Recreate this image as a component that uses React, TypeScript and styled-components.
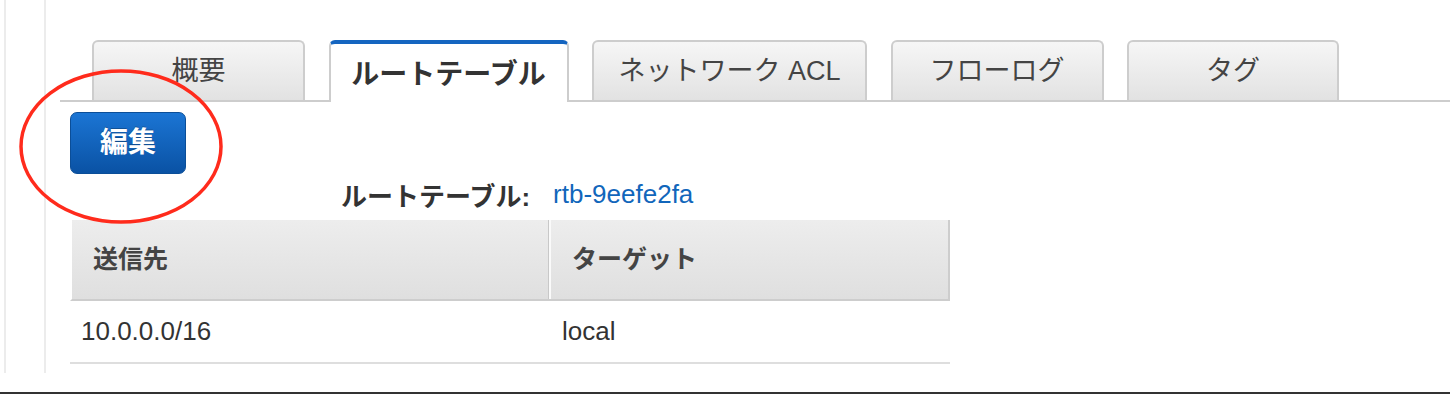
import styled, { createGlobalStyle } from 'styled-components';

const GlobalStyle = createGlobalStyle`
  html, body {
    margin: 0;
    padding: 0;
    background: #fff;
  }
  body {
    font-family: 'Liberation Sans', 'Noto Sans CJK JP', sans-serif;
    color: #333;
  }
  * {
    box-sizing: border-box;
  }
`;

const tabs = [
  { label: '概要', width: 213 },
  { label: 'ルートテーブル', width: 240, active: true },
  { label: 'ネットワーク ACL', width: 275 },
  { label: 'フローログ', width: 213 },
  { label: 'タグ', width: 212 },
];

const routes = [{ destination: '10.0.0.0/16', target: 'local' }];

const App = () => {
  return (
    <Page>
      <GlobalStyle />
      <Shell>
        <OuterRail>
          <Pane>
            <TabBar>
              {tabs.map((t) => (
                <Tab key={t.label} $w={t.width} $active={!!t.active}>
                  {t.label}
                </Tab>
              ))}
            </TabBar>
            <Body>
              <EditButton type="button">編集</EditButton>
              <InfoRow>
                <InfoLabel>ルートテーブル:</InfoLabel>
                <InfoLink href="#">rtb-9eefe2fa</InfoLink>
              </InfoRow>
              <Table>
                <HeadRow>
                  <HeadCell>送信先</HeadCell>
                  <HeadCell $divider>ターゲット</HeadCell>
                </HeadRow>
                {routes.map((r) => (
                  <BodyRow key={r.destination}>
                    <Cell $pad={11}>{r.destination}</Cell>
                    <Cell $pad={14}>{r.target}</Cell>
                  </BodyRow>
                ))}
              </Table>
            </Body>
          </Pane>
        </OuterRail>
      </Shell>
      <Footer />
      <Annotation width="250" height="240" viewBox="0 0 250 240">
        <ellipse cx="121" cy="146.5" rx="100" ry="75.5" fill="none" stroke="#ff2b1c" strokeWidth="3.5" />
      </Annotation>
    </Page>
  );
};

const Page = styled.div`
  position: relative;
  width: 1450px;
  height: 394px;
  overflow: hidden;
`;

const Shell = styled.div`
  height: 373px;
  padding-left: 4px;
`;

const OuterRail = styled.div`
  height: 100%;
  border-left: 2px solid #ececec;
  padding-left: 38px;
`;

const Pane = styled.div`
  height: 100%;
  border-left: 2px solid #ececec;
  padding-left: 14px;
`;

const TabBar = styled.div`
  display: flex;
  align-items: flex-end;
  gap: 23.5px;
  height: 102px;
  padding-left: 32px;
  border-bottom: 2px solid #cdcdcd;
`;

const Tab = styled.div<{ $w: number; $active: boolean }>`
  width: ${(p) => p.$w}px;
  height: ${(p) => (p.$active ? 62 : 60)}px;
  margin-bottom: ${(p) => (p.$active ? -2 : 0)}px;
  display: flex;
  align-items: center;
  justify-content: center;
  border: 2px solid #cdcdcd;
  border-bottom: none;
  border-top: ${(p) => (p.$active ? '4px solid #1565c0' : '2px solid #cdcdcd')};
  border-radius: 6px 6px 0 0;
  background: ${(p) => (p.$active ? '#fff' : 'linear-gradient(#f6f6f6, #e2e2e2)')};
  padding-top: ${(p) => (p.$active ? 4 : 0)}px;
  font-size: ${(p) => (p.$active ? 28 : 27)}px;
  font-weight: ${(p) => (p.$active ? 'bold' : 'normal')};
  color: ${(p) => (p.$active ? '#333' : '#444')};
  line-height: 1;
  white-space: nowrap;
`;

const Body = styled.div`
  padding-left: 10px;
`;

const EditButton = styled.button`
  display: flex;
  align-items: center;
  justify-content: center;
  margin-top: 10px;
  width: 116px;
  height: 62px;
  padding: 0;
  border: 1px solid #0b4e98;
  border-radius: 7px;
  background: linear-gradient(#1b75d4, #0a52a4);
  color: #fff;
  font-family: inherit;
  font-size: 28px;
  font-weight: bold;
  line-height: 1;
  text-shadow: 0 -1px 0 rgba(0, 0, 0, 0.25);
`;

const InfoRow = styled.div`
  display: flex;
  align-items: center;
  height: 40px;
  padding-left: 271px;
`;

const InfoLabel = styled.span`
  font-size: 26px;
  font-weight: bold;
  color: #333;
`;

const InfoLink = styled.a`
  margin-left: 23px;
  font-size: 26px;
  color: #1166bb;
  text-decoration: none;
`;

const Table = styled.div`
  margin-top: 6px;
  width: 880px;
`;

const HeadRow = styled.div`
  display: grid;
  grid-template-columns: 476px 1fr;
  height: 81px;
  border-left: 2px solid #fff;
  border-right: 2px solid #cdcdcd;
  border-bottom: 2px solid #cdcdcd;
  background: linear-gradient(#ededed, #dfdfdf);
`;

const HeadCell = styled.div<{ $divider?: boolean }>`
  display: flex;
  align-items: center;
  padding-left: ${(p) => (p.$divider ? 23 : 21)}px;
  border-left: ${(p) => (p.$divider ? '1px solid #c8c8c8' : 'none')};
  box-shadow: ${(p) => (p.$divider ? 'inset 2px 0 0 #fafafa' : 'none')};
  font-size: 25px;
  font-weight: bold;
  color: #444;
  line-height: 1;
`;

const BodyRow = styled.div`
  display: grid;
  grid-template-columns: 478px 1fr;
  height: 63px;
  border-bottom: 2px solid #dedede;
`;

const Cell = styled.div<{ $pad: number }>`
  display: flex;
  align-items: center;
  padding-left: ${(p) => p.$pad}px;
  font-size: 26px;
  color: #333;
`;

const Footer = styled.div`
  margin-top: 19px;
  height: 2px;
  background: #333;
`;

const Annotation = styled.svg`
  position: absolute;
  left: 0;
  top: 0;
  pointer-events: none;
`;

export default App;
